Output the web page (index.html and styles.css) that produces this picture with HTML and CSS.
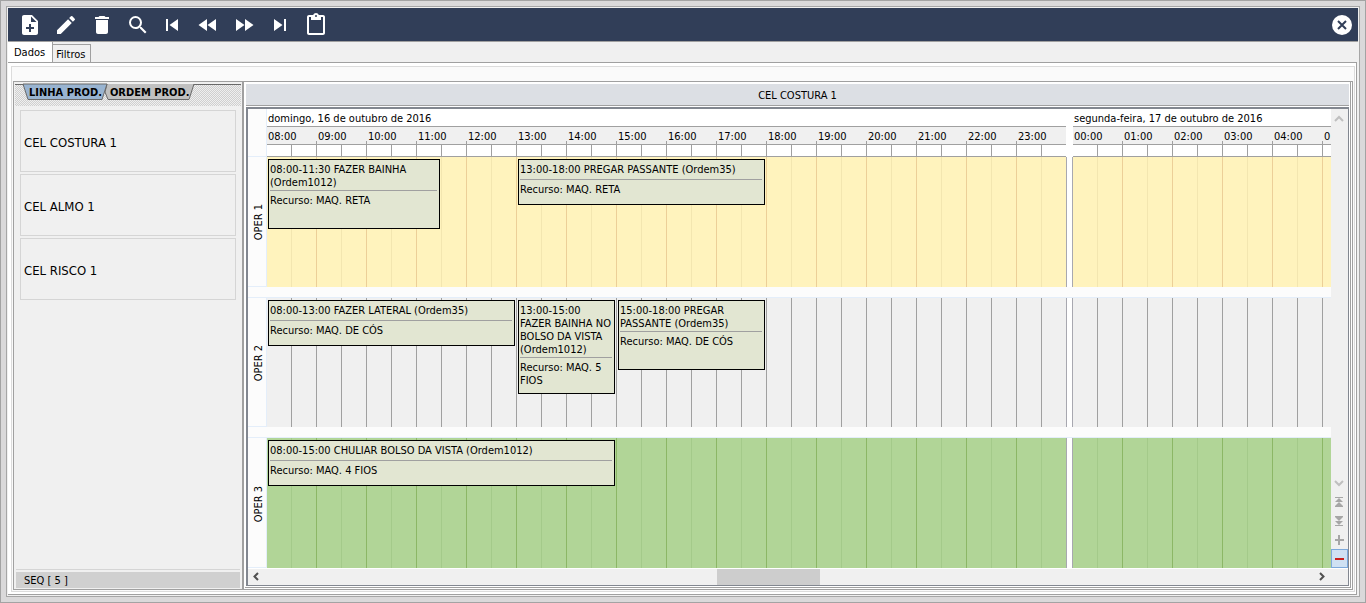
FILE: index.html
```html
<!DOCTYPE html>
<html lang="pt-BR">
<head>
<meta charset="utf-8">
<title>Programação da produção</title>
<link rel="stylesheet" href="styles.css">
</head>
<body>
<div class="window">
  <header class="toolbar">
    <div class="tools">
      <button class="tool" aria-label="Novo"><svg viewBox="0 0 24 24"><path fill-rule="evenodd" d="M14 2H6C4.900 2 4 2.900 4 4V20C4 21.100 4.900 22 6 22H18C19.100 22 20 21.100 20 20V8ZM16 16H13V19H11V16H8V14H11V11H13V14H16ZM13 9V3.500L18.500 9Z"/></svg></button>
      <button class="tool" aria-label="Editar"><svg viewBox="0 0 24 24"><path d="M3 17.250V21h3.750L17.810 9.940l-3.750-3.750L3 17.250zM20.710 7.040a1 1 0 0 0 0-1.410l-2.340-2.340a1 1 0 0 0-1.410 0l-1.830 1.830 3.750 3.750 1.830-1.830z"/></svg></button>
      <button class="tool" aria-label="Excluir"><svg viewBox="0 0 24 24"><path d="M6 19c0 1.100.9 2 2 2h8c1.100 0 2-.9 2-2V7H6v12zM19 4h-3.500l-1-1h-5l-1 1H5v2h14V4z"/></svg></button>
      <button class="tool" aria-label="Pesquisar"><svg viewBox="0 0 24 24"><path d="M15.500 14h-.79l-.28-.27A6.471 6.471 0 0 0 16 9.500 6.500 6.500 0 1 0 9.500 16c1.610 0 3.090-.59 4.230-1.570l.27.28v.79l5 4.990L20.490 19l-4.990-5zm-6 0C7.010 14 5 11.990 5 9.500S7.010 5 9.500 5 14 7.010 14 9.500 11.990 14 9.500 14z"/></svg></button>
    </div>
    <div class="tools">
      <button class="tool" aria-label="Primeiro"><svg viewBox="0 0 24 24"><path d="M6 6h2v12H6zm3.500 6l8.500 6V6z"/></svg></button>
      <button class="tool" aria-label="Anterior"><svg viewBox="0 0 24 24"><path d="M11 18V6l-8.500 6 8.500 6zm.5-6l8.500 6V6l-8.500 6z"/></svg></button>
      <button class="tool" aria-label="Próximo"><svg viewBox="0 0 24 24"><path d="M4 18l8.500-6L4 6v12zm9-12v12l8.500-6L13 6z"/></svg></button>
      <button class="tool" aria-label="Último"><svg viewBox="0 0 24 24"><path d="M6 18l8.500-6L6 6v12zM16 6v12h2V6h-2z"/></svg></button>
      <button class="tool" aria-label="Área de transferência"><svg viewBox="0 0 24 24"><path d="M19 2h-4.180C14.400.84 13.300 0 12 0S9.600.84 9.180 2H5c-1.100 0-2 .9-2 2v16c0 1.100.9 2 2 2h14c1.100 0 2-.9 2-2V4c0-1.100-.9-2-2-2zm-7 0a1 1 0 1 1 0 2 1 1 0 0 1 0-2zm7 18H5V4h2v3h10V4h2v16z"/></svg></button>
    </div>
    <button class="tool close" aria-label="Fechar"><svg viewBox="0 0 24 24"><circle cx="12" cy="12" r="10"/><path class="cross" d="M8 8l8 8M16 8l-8 8"/></svg></button>
  </header>

  <nav class="tabs">
    <button class="tab active">Dados</button>
    <button class="tab">Filtros</button>
  </nav>

  <main class="page">
    <div class="panel">
      <div class="split">
        <aside class="side">
          <div class="side-tabs">
            <svg class="side-shapes" viewBox="0 0 180 20" width="180" height="20">
              <path class="tab-back" d="M85 1L83 9L86 16.500H167L172 1"/>
              <path class="tab-front" d="M1 1H85L80 16.500H6L1 1"/>
            </svg>
            <button class="side-tab">LINHA PROD.</button>
            <button class="side-tab">ORDEM PROD.</button>
          </div>
          <div class="cells">
            <button class="cell">CEL COSTURA 1</button>
            <button class="cell">CEL ALMO 1</button>
            <button class="cell">CEL RISCO 1</button>
          </div>
          <footer class="status">SEQ [ 5 ]</footer>
        </aside>

        <section class="pane">
          <h1 class="pane-title">CEL COSTURA 1</h1>
          <div class="scheduler">
            <div class="board">
              <div class="line head">
                <div class="corner"></div>
                <div class="track">
                  <div class="day first">
                    <div class="date">domingo, 16 de outubro de 2016</div>
                    <div class="hours"><span>08:00</span><span>09:00</span><span>10:00</span><span>11:00</span><span>12:00</span><span>13:00</span><span>14:00</span><span>15:00</span><span>16:00</span><span>17:00</span><span>18:00</span><span>19:00</span><span>20:00</span><span>21:00</span><span>22:00</span><span>23:00</span></div>
                    <div class="ticks"></div>
                  </div>
                  <div class="day">
                    <div class="date">segunda-feira, 17 de outubro de 2016</div>
                    <div class="hours"><span>00:00</span><span>01:00</span><span>02:00</span><span>03:00</span><span>04:00</span><span>0</span></div>
                    <div class="ticks"></div>
                  </div>
                </div>
              </div>
              <div class="rows">
                <div class="line row yellow">
                  <div class="label"><span>OPER 1</span></div>
                  <div class="track">
                    <div class="slots first"></div><div class="slots"></div>
                    <article class="event" style="--start:0;--span:3.5;--slots:3"><p class="what">08:00-11:30 FAZER BAINHA<br>(Ordem1012)</p><p class="res">Recurso: MAQ. RETA</p></article>
                    <article class="event" style="--start:5;--span:5;--slots:2"><p class="what">13:00-18:00 PREGAR PASSANTE (Ordem35)</p><p class="res">Recurso: MAQ. RETA</p></article>
                  </div>
                </div>
                <div class="line row gray">
                  <div class="label"><span>OPER 2</span></div>
                  <div class="track">
                    <div class="slots first"></div><div class="slots"></div>
                    <article class="event" style="--start:0;--span:5;--slots:2"><p class="what">08:00-13:00 FAZER LATERAL (Ordem35)</p><p class="res">Recurso: MAQ. DE CÓS</p></article>
                    <article class="event" style="--start:5;--span:2;--slots:4"><p class="what">13:00-15:00<br>FAZER BAINHA NO<br>BOLSO DA VISTA<br>(Ordem1012)</p><p class="res">Recurso: MAQ. 5<br>FIOS</p></article>
                    <article class="event" style="--start:7;--span:3;--slots:3"><p class="what">15:00-18:00 PREGAR<br>PASSANTE (Ordem35)</p><p class="res">Recurso: MAQ. DE CÓS</p></article>
                  </div>
                </div>
                <div class="line row green">
                  <div class="label"><span>OPER 3</span></div>
                  <div class="track">
                    <div class="slots first"></div><div class="slots"></div>
                    <article class="event" style="--start:0;--span:7;--slots:2"><p class="what">08:00-15:00 CHULIAR BOLSO DA VISTA (Ordem1012)</p><p class="res">Recurso: MAQ. 4 FIOS</p></article>
                  </div>
                </div>
              </div>
            </div>
            <div class="vbar">
              <button class="step" aria-label="Para cima"><svg viewBox="0 0 16 18"><path class="chev pale" d="M4 11L8 7L12 11"/></svg></button>
              <span class="space"></span>
              <button class="step" aria-label="Para baixo"><svg viewBox="0 0 16 18"><path class="chev pale" d="M4 7L8 11L12 7"/></svg></button>
              <button class="step" aria-label="Recurso anterior"><svg viewBox="0 0 16 18"><path class="solid" d="M4 4h8v1H4zM8 5l4 4H4zM8 9l4 4H4zM4 13h8v1H4z"/></svg></button>
              <button class="step" aria-label="Próximo recurso"><svg viewBox="0 0 16 18"><path class="solid" d="M4 4h8v1H4zM4 5h8L8 9zM4 9h8L8 13zM4 13h8v1H4z"/></svg></button>
              <button class="step" aria-label="Mais recursos"><svg viewBox="0 0 16 18"><path class="solid" d="M7 4h2v4h4v2H9v4H7v-4H4V8h3z"/></svg></button>
              <button class="step hot" aria-label="Menos recursos"><svg viewBox="0 0 16 18"><path class="minus" d="M3 8h9v2H3z"/></svg></button>
            </div>
            <div class="hbar">
              <button class="step" aria-label="Para a esquerda"><svg viewBox="0 0 16 16"><path class="chev" d="M10 4L6.500 7.500L10 11"/></svg></button>
              <div class="rail"><div class="thumb" style="width:17.3%"></div></div>
              <button class="step" aria-label="Para a direita"><svg viewBox="0 0 16 16"><path class="chev" d="M6 4L9.500 7.500L6 11"/></svg></button>
            </div>
          </div>
        </section>
      </div>
    </div>
  </main>
</div>
</body>
</html>
```
FILE: styles.css
```css
* { box-sizing: border-box; margin: 0; padding: 0; }
body {
  height: 100vh;
  padding: 5px;
  display: flex;
  border: 1px solid #a3a3a3;
  background: #dad9da;
  color: #000;
  font: 11px/13px Tahoma, "DejaVu Sans Condensed", "Noto Sans", sans-serif;
  overflow: hidden;
}
button { border: 0; background: none; color: inherit; font: inherit; }
svg { display: block; }

.window {
  flex: 1;
  min-width: 0;
  display: flex;
  flex-direction: column;
  padding: 1px 1px 0;
  border: 1px solid #a6a6a6;
  background: #f0f0f0;
}
.toolbar {
  display: flex;
  gap: 10px;
  height: 34px;
  padding: 5px 4px 0 10px;
  background: #313e58;
  border-bottom: 1px solid #a0a0a0;
}
.tools { display: flex; gap: 12px; }
.tool { width: 24px; height: 24px; fill: #fff; }
.close { margin-left: auto; }
.cross { fill: none; stroke: #313e58; stroke-width: 2; }

.tabs { display: flex; align-items: flex-end; height: 20px; }
.tab {
  height: 18px;
  padding: 1px 4px 0 3px;
  border: 1px solid #a0a0a0;
  border-width: 1px 1px 0 0;
}
.tab.active { height: 20px; padding: 0 7px 0 6px; background: #fff; border-top: 0; }

.page {
  flex: 1;
  min-height: 0;
  display: flex;
  margin: 0 1px 1px 0;
  padding: 3px 1px 2px 3px;
  background: #fff;
  border: 1px solid #a0a0a0;
  border-left: 0;
}
.panel {
  flex: 1;
  min-width: 0;
  display: flex;
  padding: 14px 1px 1px;
  background: #fafafa;
  border: 1px solid #dcdcdc;
}
.split {
  flex: 1;
  min-width: 0;
  display: flex;
  border: 1px solid #a0a0a0;
  background: #fff;
}

.side {
  width: 230px;
  display: flex;
  flex-direction: column;
  padding: 2px 1px 1px;
  border-right: 2px solid #a0a0a0;
  background: #f0f0f0;
}
.side-tabs {
  position: relative;
  display: flex;
  gap: 8px;
  height: 22px;
  padding: 1px 0 0 14px;
  border-top: 1px solid #696969;
  background: #e6e6e6 conic-gradient(#cfcfcf 25%, #efefef 0 50%, #cfcfcf 0 75%, #efefef 0) 0 0 / 2px 2px;
}
.side-shapes { position: absolute; left: 7px; top: -2px; }
.side-shapes path { stroke: #696969; }
.tab-front { fill: #99b4d1; }
.tab-back { fill: #c0c0c0; }
.side-tab { position: relative; height: 13px; font-weight: bold; white-space: nowrap; }
.cells { flex: 1; display: flex; flex-direction: column; gap: 2px; padding: 4px 5px; }
.cell {
  height: 62px;
  padding: 2px 3px 0;
  border: 1px solid #d5d5d5;
  text-align: left;
  font-size: 13px;
}
.status {
  height: 18px;
  padding-left: 8px;
  margin: 0 1px;
  border-top: 2px solid #f0f0f0;
  background: #d0d0d0;
  box-shadow: 0 -1px #d5d5d5;
  font-size: 11px;
  line-height: 17px;
}

.pane {
  flex: 1;
  min-width: 0;
  display: flex;
  flex-direction: column;
  margin: 0 1px 1px;
  padding: 2px 1px 1px;
  border: 1px solid #a0a0a0;
  border-width: 0 1px 1px 0;
}
.pane-title {
  height: 22px;
  margin-bottom: 1px;
  background: #dcdfe4;
  border-bottom: 1px solid #a0a0a0;
  font-size: 11px;
  font-weight: normal;
  line-height: 24px;
  text-align: center;
}
.scheduler {
  flex: 1;
  min-height: 0;
  display: grid;
  grid-template: minmax(0, 1fr) 17px / minmax(0, 1fr) 17px;
  border: 1px solid #828790;
  border-width: 2px 1px 1px 2px;
  background: #f0f0f0;
}
.board { display: flex; flex-direction: column; min-height: 0; background: #fcfcfc; }
.line { display: flex; }
.corner, .label { width: 19px; flex: none; border-right: 1px solid #e4eefa; }
.corner { border-bottom: 1px solid #e4eefa; }
.track { flex: 1; min-width: 0; display: flex; gap: 5px; position: relative; overflow: hidden; background: #fff; }
.day, .slots { flex: 1; min-width: 0; border-left: 1px solid #a8a8b0; overflow: hidden; }
.first { flex: none; width: 800px; border-left: 0; border-right: 1px solid #a8a8b0; }
.day { border-color: transparent; }
.date { height: 18px; padding: 3px 1px 0; border-bottom: 1px solid #a0a0a0; white-space: nowrap; }
.hours {
  display: flex;
  height: 18px;
  border-bottom: 1px solid #a0a0a0;
  background: linear-gradient(90deg, transparent 49px, #a0a0a0 0) 0 100% / 50px 3px repeat-x #f0f0f0;
}
.hours span { flex: 0 0 50px; padding: 3px 0 0 1px; }
.hours span:last-child { flex-shrink: 1; min-width: 0; }
.ticks {
  height: 12px;
  border-bottom: 1px solid #a0a0a0;
  background: repeating-linear-gradient(90deg, #fff 0 24px, #a0a0a0 0 25px);
}

.rows { flex: 1; min-height: 0; display: flex; flex-direction: column; gap: 10px; }
.row { flex: 1; min-height: 0; }
.row + .row { border-top: 1px solid #e4eefa; }
.label {
  display: flex;
  align-items: center;
  justify-content: center;
  padding: 2px 0 0 2px;
  border-bottom: 1px solid #e4eefa;
}
.label span { writing-mode: vertical-rl; transform: rotate(180deg); }
.slots {
  background: repeating-linear-gradient(90deg, var(--fill) 0 24px, var(--half) 0 25px, var(--fill) 0 49px, var(--hour) 0 50px);
}
.yellow { --fill: #fff3bd; --half: #f3e6b0; --hour: #eccf98; }
.gray { --fill: #f0f0f0; --half: #a0a0a0; --hour: #a0a0a0; }
.green { --fill: #b1d597; --half: #a4ca8a; --hour: #8cb766; }

.event {
  position: absolute;
  top: 2px;
  left: calc(var(--start) * 50px + 1px);
  width: calc(var(--span) * 50px - 3px);
  height: calc(var(--slots) * 24px - 2px);
  padding: 3px 2px 0 1px;
  border: 1px solid #000;
  background: #e2e6d2;
  white-space: nowrap;
}
.what { min-height: 17px; padding-bottom: 1px; border-bottom: 1px solid #a0a0a0; }
.res { padding-top: 3px; }

.vbar { display: flex; flex-direction: column; }
.step { display: flex; align-items: center; width: 17px; height: 19px; flex: none; }
.step svg { width: 16px; height: 18px; flex: none; }
.space { flex: 1; }
.hot { background: #cfe1f3; border: 1px solid #7da9db; }
.chev { fill: none; stroke: #505050; stroke-width: 2; }
.pale { stroke: #bfbfbf; }
.solid { fill: #a6a6a6; }
.minus { fill: #c9211e; }
.hbar { grid-column: 1 / 3; display: flex; padding-right: 17px; border-top: 1px solid #fff; }
.hbar .step { height: 16px; }
.hbar svg { height: 16px; }
.rail { flex: 1; display: flex; padding-left: 452px; }
.thumb { background: #cdcdcd; }
```
